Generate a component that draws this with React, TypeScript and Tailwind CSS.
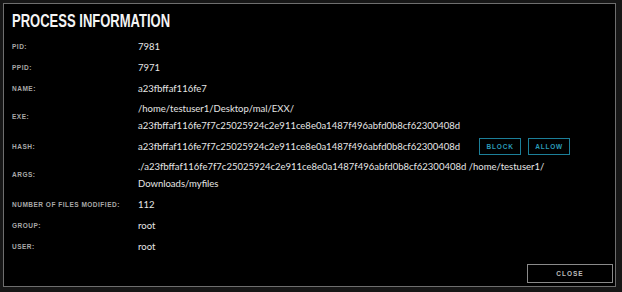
const HASH = 'a23fbffaf116fe7f7c25025924c2e911ce8e0a1487f496abfd0b8cf62300408d';

type Row = { label: string; lines: string[]; actions?: boolean };

const rows: Row[] = [
  { label: 'PID:', lines: ['7981'] },
  { label: 'PPID:', lines: ['7971'] },
  { label: 'NAME:', lines: ['a23fbffaf116fe7'] },
  { label: 'EXE:', lines: ['/home/testuser1/Desktop/mal/EXX/', HASH] },
  { label: 'HASH:', lines: [HASH], actions: true },
  { label: 'ARGS:', lines: ['./' + HASH + ' /home/testuser1/', 'Downloads/myfiles'] },
  { label: 'NUMBER OF FILES MODIFIED:', lines: ['112'] },
  { label: 'GROUP:', lines: ['root'] },
  { label: 'USER:', lines: ['root'] }
];

function InfoRow({ row }: { row: Row }) {
  const multi = row.lines.length > 1;
  return (
    <div className={multi ? 'flex items-center pt-[1px] pb-[2px]' : 'flex items-center py-[2px]'}>
      <div className="w-[126px] shrink-0 whitespace-nowrap text-[6.5px] font-bold tracking-[0.5px] text-[#a9a9a9] font-['Liberation_Sans',sans-serif]">
        {row.label}
      </div>
      <div className="flex flex-col text-[9.5px] leading-[17px] text-[#e6e6e6] font-['Lato',sans-serif]">
        {row.lines.map((l) => (
          <span key={l} className="whitespace-nowrap">
            {l}
          </span>
        ))}
      </div>
      {row.actions && (
        <div className="flex gap-[7px] ml-[19px]">
          <button className="h-[17px] w-[42px] border border-[#1c7f99] text-[#2a9bb8] text-[6.5px] font-bold tracking-[0.8px] font-['Liberation_Sans',sans-serif]">
            BLOCK
          </button>
          <button className="h-[17px] w-[42px] border border-[#1c7f99] text-[#2a9bb8] text-[6.5px] font-bold tracking-[0.8px] font-['Liberation_Sans',sans-serif]">
            ALLOW
          </button>
        </div>
      )}
    </div>
  );
}

export default function App() {
  return (
    <div className="w-[622px] h-[292px] bg-[#161616] pt-[3px] pl-[3px]">
      <div className="w-[613px] h-[284px] bg-black border border-[#6e6e6e] flex flex-col pl-[8px] pr-[2px]">
        <h1 className="pt-[5px] h-[27px] whitespace-nowrap">
          <span className="inline-block origin-left scale-x-[0.685] text-[19px] leading-[22px] font-bold text-[#f4f4f4] font-['Liberation_Sans',sans-serif]">
            PROCESS INFORMATION
          </span>
        </h1>
        <div className="flex flex-col mt-[5px]">
          {rows.map((r) => (
            <InfoRow key={r.label} row={r} />
          ))}
        </div>
        <div className="mt-auto mb-[3px] flex justify-end">
          <button className="h-[19px] w-[86px] border border-[#8a8a8a] text-[#bdbdbd] text-[6.5px] font-bold tracking-[1px] font-['Liberation_Sans',sans-serif]">
            CLOSE
          </button>
        </div>
      </div>
    </div>
  );
}
